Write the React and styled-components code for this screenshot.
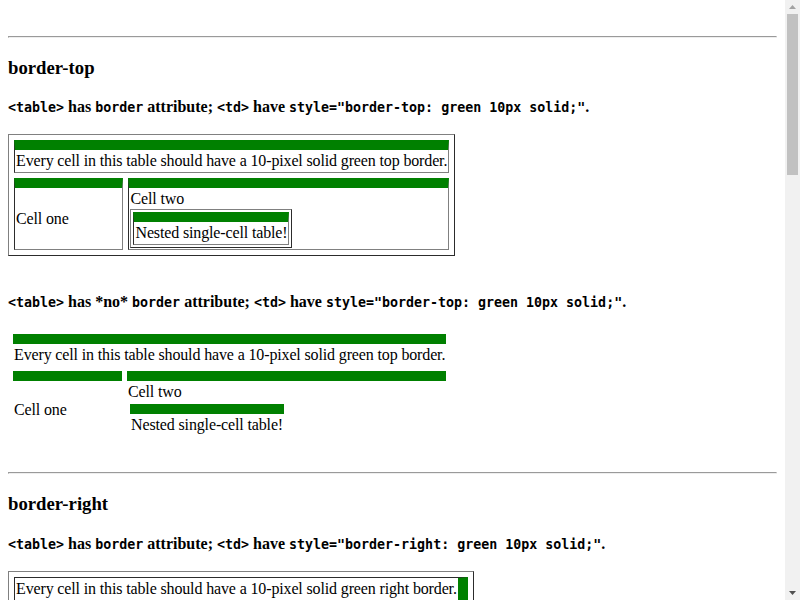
import React from 'react';
import styled, { createGlobalStyle } from 'styled-components';

const GlobalStyle = createGlobalStyle`
  html, body {
    margin: 0;
    background: #fff;
    color: #000;
    font-family: "Liberation Serif", "Times New Roman", serif;
    font-size: 16px;
    line-height: 20px;
  }
`;

const Viewport = styled.div`
  display: flex;
  height: 100vh;
  overflow: hidden;
`;

const Page = styled.main`
  flex: 1;
  min-width: 0;
  padding: 8px 8px 0;
  overflow: hidden;
`;

// fake classic scrollbar, the page is scrolled to the top
const Scrollbar = styled.div`
  width: 15px;
  flex: none;
  display: flex;
  flex-direction: column;
  align-items: center;
  background: #f1f1f1;
`;

const Arrow = styled.div`
  height: 14px;
  width: 15px;
  flex: none;
  display: flex;
  align-items: center;
  justify-content: center;
  svg {
    display: block;
  }
`;

const Track = styled.div`
  flex: 1;
  width: 100%;
  padding: 0 2px;
  box-sizing: border-box;
`;

const Thumb = styled.div`
  height: 161px;
  background: #c1c1c1;
`;

const Break = styled.div`
  height: 20px;
`;

const Rule = styled.hr`
  margin: 8px 0;
  height: 0;
  border-style: solid;
  border-width: 1px;
  border-color: #9a9a9a #eee #eee #9a9a9a;
`;

const Title = styled.h3`
  font-size: 18.72px;
  line-height: 22px;
  font-weight: bold;
  margin: 18.72px 0;
`;

const Note = styled.p`
  font-weight: bold;
  margin: 16px 0;
  white-space: nowrap;
`;

const Code = styled.code`
  font-family: "DejaVu Sans Mono", monospace;
  font-size: 13.3px;
`;

const Table = styled.table`
  border-collapse: separate;
  border-spacing: ${({ $spacing }) => $spacing}px;
  border: ${({ $bordered }) => ($bordered ? '1px outset gray' : 'none')};
  font-size: 16px;
  line-height: 20px;
  letter-spacing: -0.14px;
`;

const Cell = styled.td`
  padding: 1px;
  vertical-align: middle;
  white-space: nowrap;
  border: ${({ $bordered }) => ($bordered ? '1px inset gray' : 'none')};
  border-${({ $side }) => $side}: green 10px solid;
`;

const SIDES = ['top', 'right', 'bottom', 'left'];

function TestTable({ side, bordered }) {
  return (
    <Table $bordered={bordered} $spacing={5}>
      <tbody>
        <tr>
          <Cell colSpan={2} $side={side} $bordered={bordered}>
            Every cell in this table should have a 10-pixel solid green {side} border.
          </Cell>
        </tr>
        <tr>
          <Cell $side={side} $bordered={bordered}>Cell one</Cell>
          <Cell $side={side} $bordered={bordered}>
            Cell two
            <Table $bordered={bordered} $spacing={2}>
              <tbody>
                <tr>
                  <Cell $side={side} $bordered={bordered}>Nested single-cell table!</Cell>
                </tr>
              </tbody>
            </Table>
          </Cell>
        </tr>
      </tbody>
    </Table>
  );
}

function Section({ side }) {
  const style = `"border-${side}: green 10px solid;"`;
  return (
    <section>
      <Rule />
      <Title>border-{side}</Title>
      <Note>
        <Code>&lt;table&gt;</Code> has <Code>border</Code> attribute; <Code>&lt;td&gt;</Code> have{' '}
        <Code>style={style}</Code>.
      </Note>
      <TestTable side={side} bordered />
      <Break />
      <Note>
        <Code>&lt;table&gt;</Code> has *no* <Code>border</Code> attribute; <Code>&lt;td&gt;</Code> have{' '}
        <Code>style={style}</Code>.
      </Note>
      <TestTable side={side} bordered={false} />
      <Break />
    </section>
  );
}

export default function App() {
  return (
    <>
      <GlobalStyle />
      <Viewport>
        <Page>
          <Break />
          {SIDES.map((side) => (
            <Section key={side} side={side} />
          ))}
        </Page>
        <Scrollbar>
          <Arrow>
            <svg width="7" height="4" viewBox="0 0 7 4">
              <path d="M0 4 L3.5 0 L7 4 Z" fill="#a3a3a3" />
            </svg>
          </Arrow>
          <Track>
            <Thumb />
          </Track>
          <Arrow>
            <svg width="7" height="4" viewBox="0 0 7 4">
              <path d="M0 0 L7 0 L3.5 4 Z" fill="#505050" />
            </svg>
          </Arrow>
        </Scrollbar>
      </Viewport>
    </>
  );
}
